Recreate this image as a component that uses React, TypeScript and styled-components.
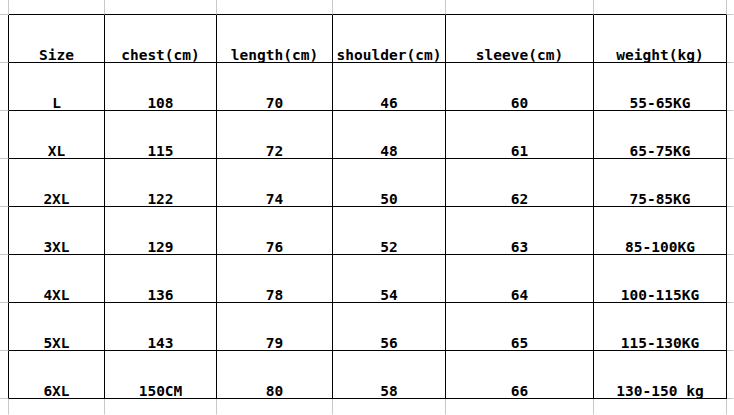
import React from 'react';
import styled, { createGlobalStyle } from 'styled-components';

const GlobalStyle = createGlobalStyle`
  html, body {
    margin: 0;
    padding: 0;
    background: #fff;
  }
`;

// Spreadsheet canvas: margin column/row around the bordered size table
const Sheet = styled.div`
  display: grid;
  grid-template-columns: 9px 96px 112px 116px 113px 148px 133px 1fr;
  grid-template-rows: 15px repeat(8, 48px) 1fr;
  width: 734px;
  height: 415px;
  background: #fff;
  overflow: hidden;
`;

const Cell = styled.div<{ $right: string; $bottom: string }>`
  box-sizing: border-box;
  border-right: 1px solid ${p => p.$right};
  border-bottom: 1px solid ${p => p.$bottom};
  display: flex;
  align-items: flex-end;
  justify-content: center;
  padding-bottom: 0;
  font-family: "DejaVu Sans Mono", "Liberation Mono", monospace;
  font-weight: bold;
  font-size: 14.5px;
  line-height: 13px;
  color: #000;
  white-space: pre;
`;

const GRID = '#c8c8c8';
const INK = '#000';
const NONE = 'transparent';

const headers = ['Size', 'chest(cm)', 'length(cm)', 'shoulder(cm)', 'sleeve(cm)', 'weight(kg)'];

const rows = [
  ['L', '108', '70', '46', '60', '55-65KG'],
  ['XL', '115', '72', '48', '61', '65-75KG'],
  ['2XL', '122', '74', '50', '62', '75-85KG'],
  ['3XL', '129', '76', '52', '63', '85-100KG'],
  ['4XL', '136', '78', '54', '64', '100-115KG'],
  ['5XL', '143', '79', '56', '65', '115-130KG'],
  ['6XL', '150CM', '80', '58', '66', '130-150 kg'],
];

const table = [headers, ...rows];

const App: React.FC = () => {
  const cells: React.ReactNode[] = [];

  for (let r = 0; r < 10; r++) {
    for (let c = 0; c < 8; c++) {
      const inRows = r >= 1 && r <= 8;
      const inCols = c >= 1 && c <= 6;
      let right = c === 7 ? NONE : GRID;
      let bottom = r === 9 ? NONE : GRID;
      let text = '';

      if (inRows && inCols) {
        right = INK;
        bottom = INK;
        text = table[r - 1][c - 1];
      } else {
        // left edge and top edge of the table
        if (c === 0 && inRows) right = INK;
        if (r === 0 && inCols) bottom = INK;
      }

      cells.push(
        <Cell key={`${r}-${c}`} $right={right} $bottom={bottom}>
          {text}
        </Cell>
      );
    }
  }

  return (
    <>
      <GlobalStyle />
      <Sheet>{cells}</Sheet>
    </>
  );
};

export default App;
